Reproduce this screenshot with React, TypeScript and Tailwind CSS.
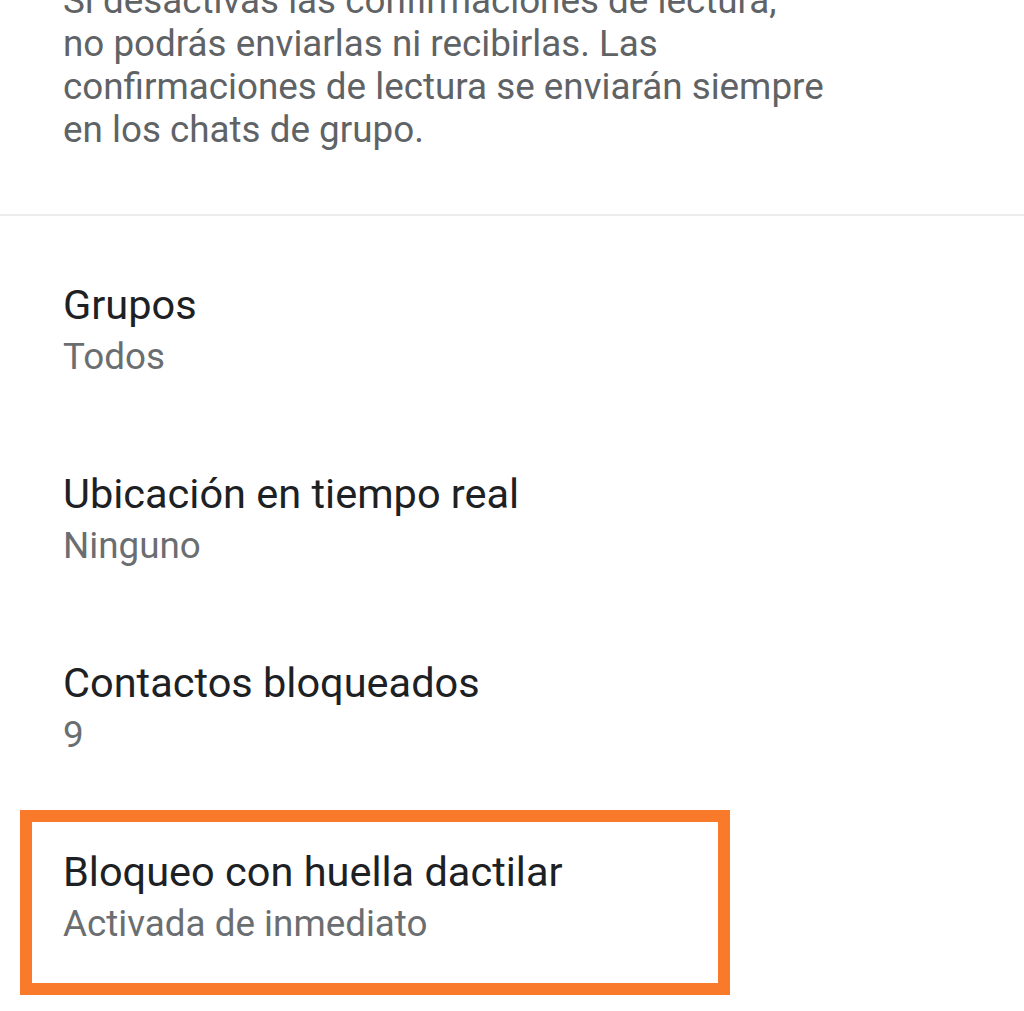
import React from "react"

const items = [
  { title: "Grupos", value: "Todos" },
  { title: "Ubicación en tiempo real", value: "Ninguno" },
  { title: "Contactos bloqueados", value: "9" },
  { title: "Bloqueo con huella dactilar", value: "Activada de inmediato", highlight: true },
]

function SettingRow({ title, value, highlight }: { title: string; value: string; highlight?: boolean }) {
  return (
    <div className="relative pl-[63px] pt-[42px] pb-[43px]">
      {highlight && (
        <div className="absolute left-[20px] top-[4px] w-[710px] h-[185px] border-[12px] border-[#fa7a2b] pointer-events-none" />
      )}
      <div className="text-[41.5px] leading-[48px] text-[#1e2124]">{title}</div>
      <div className="text-[36.8px] leading-[56px] text-[#6b6e70]">{value}</div>
    </div>
  )
}

export default function App() {
  return (
    <div className="h-[1011px] w-[1024px] overflow-hidden bg-white" style={{ fontFamily: "Roboto, 'Noto Sans', sans-serif" }}>
      <div className="-mt-[21px] pb-[63px] pl-[63px] pr-4 text-[36.8px] leading-[43px] text-[#5f6366]">
        <p>
          Si desactivas las confirmaciones de lectura,
          <br />
          no podrás enviarlas ni recibirlas. Las
          <br />
          confirmaciones de lectura se enviarán siempre
          <br />
          en los chats de grupo.
        </p>
      </div>
      <div className="h-[2px] bg-[#ececec]" />
      <div className="pt-[23px]">
        {items.map((item) => (
          <SettingRow key={item.title} {...item} />
        ))}
      </div>
    </div>
  )
}
